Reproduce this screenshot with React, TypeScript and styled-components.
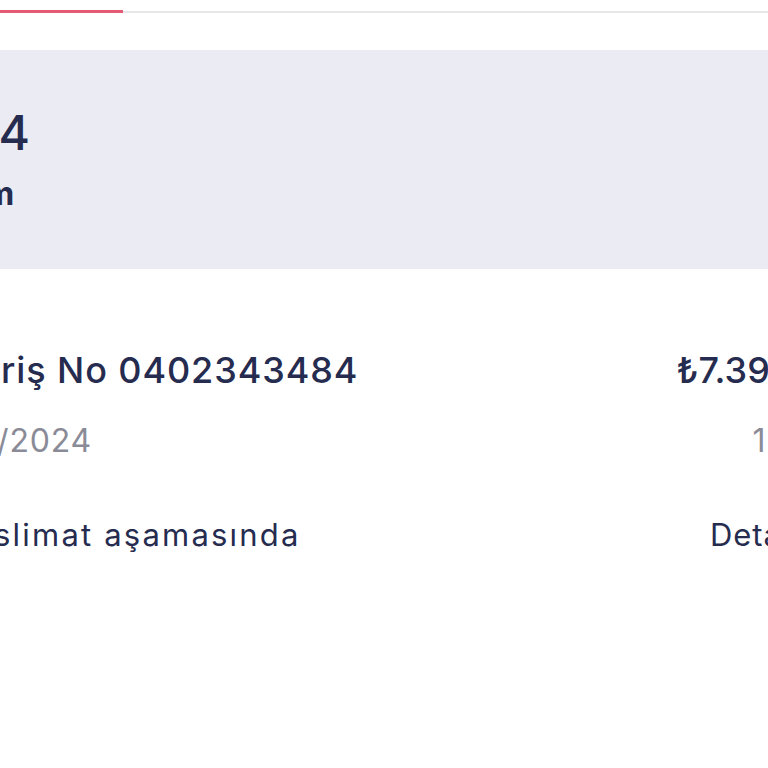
import React from "react";
import styled, { createGlobalStyle } from "styled-components";
import { Truck, ChevronRight } from "lucide-react";

const GlobalStyle = createGlobalStyle`
  html, body { margin: 0; padding: 0; background: #ffffff; }
  body { font-family: Inter, "Noto Sans", sans-serif; -webkit-font-smoothing: antialiased; }
`;

const Viewport = styled.div`
  width: 768px;
  height: 768px;
  overflow: hidden;
  background: #ffffff;
`;

const Canvas = styled.div`
  width: 968px;
  margin-left: -100px;
  display: flex;
  flex-direction: column;
`;

const TabTrack = styled.div`
  display: flex;
  align-items: center;
  margin-top: 10px;
  height: 3px;
`;

const TabActive = styled.div`
  width: 223px;
  height: 3px;
  background: #e45a75;
`;

const TabRest = styled.div`
  flex: 1;
  height: 2px;
  background: #e7e7ea;
`;

const Panel = styled.section`
  margin-top: 37px;
  height: 219px;
  box-sizing: border-box;
  background: #ebecf3;
  padding: 54px 0 0 9px;
  display: flex;
  flex-direction: column;
  gap: 12px;
  color: #262c4f;
`;

const PanelTitle = styled.div`
  font-size: 48px;
  font-weight: 500;
  line-height: 1.2;
`;

const PanelSub = styled.div`
  font-size: 32px;
  font-weight: 700;
  line-height: 1.25;
`;

const Orders = styled.section`
  padding: 80px 20px 0 22px;
  display: flex;
  flex-direction: column;
`;

const Row = styled.div<{ $gap: number }>`
  display: flex;
  justify-content: space-between;
  align-items: center;
  margin-top: ${(p) => p.$gap}px;
`;

const Title = styled.span`
  font-size: 36px;
  font-weight: 500;
  line-height: 1.2;
  letter-spacing: 0.9px;
  color: #262c4f;
  white-space: nowrap;
`;

const Price = styled.span`
  font-size: 36px;
  font-weight: 500;
  line-height: 1.2;
  color: #262c4f;
  white-space: nowrap;
`;

const Meta = styled.span`
  font-size: 32px;
  font-weight: 400;
  line-height: 1.15;
  letter-spacing: 0.8px;
  color: #8a8b97;
  white-space: nowrap;
`;

const Status = styled.span`
  display: flex;
  align-items: center;
  gap: 8px;
  font-size: 31px;
  font-weight: 400;
  line-height: 1.2;
  letter-spacing: 2.2px;
  color: #262c4f;
  white-space: nowrap;
`;

const DetailLink = styled.a`
  display: flex;
  align-items: center;
  gap: 18px;
  font-size: 31px;
  font-weight: 400;
  line-height: 1.2;
  letter-spacing: 1px;
  color: #262c4f;
  text-decoration: none;
  white-space: nowrap;
`;

export default function App() {
  return (
    <>
      <GlobalStyle />
      <Viewport>
        <Canvas>
          <TabTrack>
            <TabActive />
            <TabRest />
          </TabTrack>
          <Panel>
            <PanelTitle>2024</PanelTitle>
            <PanelSub>Durum</PanelSub>
          </Panel>
          <Orders>
            <Row $gap={0}>
              <Title>Sipariş No 0402343484</Title>
              <Price>₺7.399,00</Price>
            </Row>
            <Row $gap={31}>
              <Meta>2/04/2024</Meta>
              <Meta>1 ürün</Meta>
            </Row>
            <Row $gap={56}>
              <Status>
                <Truck size={24} strokeWidth={2} />
                Teslimat aşamasında
              </Status>
              <DetailLink href="#">
                Detay
                <ChevronRight size={30} strokeWidth={2} />
              </DetailLink>
            </Row>
          </Orders>
        </Canvas>
      </Viewport>
    </>
  );
}
